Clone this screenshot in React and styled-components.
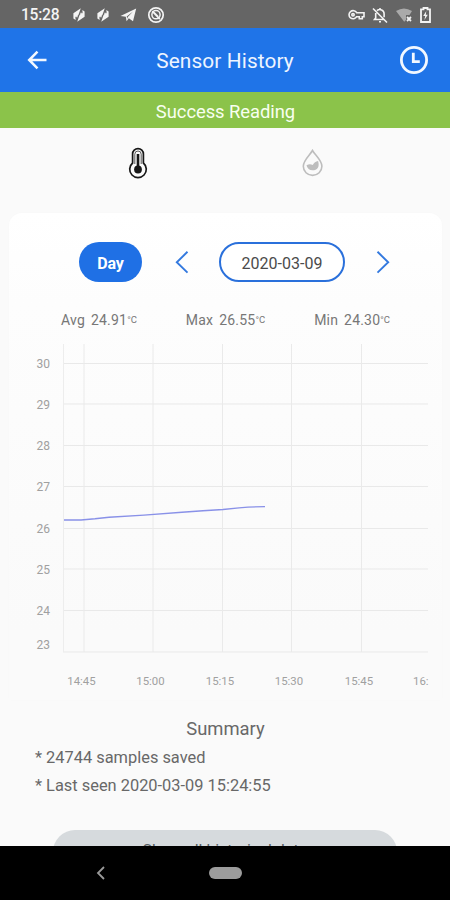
import React, { useState } from "react";
import styled, { createGlobalStyle } from "styled-components";

const GlobalStyle = createGlobalStyle`
* { box-sizing: border-box; }
body {
margin: 0;
background: #fafafa;
font-family: Roboto, "Liberation Sans", sans-serif;
}
button {
font-family: inherit;
padding: 0;
border: none;
background: transparent;
cursor: pointer;
}
`;

const Screen = styled.div`
display: flex;
flex-direction: column;
width: 450px;
height: 900px;
overflow: hidden;
background: #fafafa;
`;

const StatusBar = styled.div`
display: flex;
flex: 0 0 28px;
justify-content: space-between;
padding: 0 19px 0 21px;
background: #656565;
color: #f4f4f4;
`;

const StatusGroup = styled.div`
display: flex;
align-items: center;
gap: ${props => props.$gap}px;
padding-top: 1px;
`;

const Clock = styled.span`
width: 38px;
margin-right: 3px;
font-size: 15.6px;
font-weight: 500;
letter-spacing: -0.25px;
white-space: nowrap;
`;

const Header = styled.header`
display: grid;
grid-template-columns: 74px 1fr 74px;
flex: 0 0 64px;
align-items: center;
background: #1f74e8;
color: #eef5ff;
`;

const HeaderButton = styled.button`
display: flex;
justify-content: center;
padding-left: ${props => props.$shift || 0}px;
color: #f2f8ff;
`;

const HeaderTitle = styled.h1`
margin: 0;
padding-top: 2px;
text-align: center;
font-size: 20.8px;
font-weight: 400;
letter-spacing: 0.13px;
`;

const Banner = styled.div`
display: flex;
flex: 0 0 36px;
align-items: center;
justify-content: center;
padding: 2px 0 0 1px;
background: #8bc34a;
color: #f8fff0;
font-size: 18.4px;
letter-spacing: -0.05px;
`;

const Content = styled.main`
display: flex;
flex: 1;
flex-direction: column;
min-height: 0;
overflow: hidden;
`;

const TypeTabs = styled.div`
display: grid;
grid-template-columns: 1fr 1fr;
flex: 0 0 85px;
padding: 0 50px;
`;

const TypeTab = styled.button`
display: flex;
justify-content: center;
align-items: flex-start;
padding-top: ${props => props.$top}px;
color: ${props => props.$active ? "#171717" : "#bdbdbd"};
`;

const Card = styled.section`
display: flex;
flex: 0 0 487px;
flex-direction: column;
margin: 0 8px 0 9px;
border-radius: 13px 13px 0 0;
background: linear-gradient(#ffffff 0, #fdfdfd 90px, #fafafa 420px);
box-shadow: 0 0 5px rgba(0, 0, 0, 0.012);
`;

const Controls = styled.div`
display: flex;
align-items: center;
height: 40px;
margin: 29px 0 0 70px;
`;

const DayButton = styled.button`
width: 63px;
height: 40px;
border-radius: 20px;
background: #1f70e5;
color: #ffffff;
font-size: 16px;
font-weight: 700;
padding-top: 2px;
letter-spacing: -0.2px;
`;

const ArrowButton = styled.button`
display: flex;
width: 14px;
margin: 0 ${props => props.$right}px 0 ${props => props.$left}px;
color: #3379df;
`;

const DateButton = styled.button`
width: 126px;
height: 40px;
padding-top: 2px;
border: 2px solid #2a70db;
border-radius: 20px;
background: #ffffff;
color: #4b4b4b;
font-size: 16px;
`;

const Stats = styled.div`
display: flex;
justify-content: space-between;
width: 329px;
height: 20px;
margin: 28px 0 0 52px;
color: #777777;
font-size: 14px;
`;

const Stat = styled.div`
display: flex;
align-items: center;
gap: 6px;
white-space: nowrap;
letter-spacing: 0.2px;
`;

const Unit = styled.sup`
display: inline-block;
font-size: 9.5px;
line-height: 9px;
letter-spacing: 0;
vertical-align: 2px;
`;

const ChartSvg = styled.svg`
display: block;
flex: none;
margin-top: 12px;
font-family: Roboto, sans-serif;
font-size: 12px;
`;

const Summary = styled.section`
display: flex;
flex: none;
flex-direction: column;
padding: 16px 35px 0;
color: #686868;
`;

const SummaryTitle = styled.h2`
margin: 0 0 5px;
padding-left: 1px;
height: 24px;
text-align: center;
line-height: 25px;
font-size: 18.4px;
font-weight: 400;
letter-spacing: 0;
`;

const SummaryLine = styled.p`
margin: 0;
height: 28px;
line-height: 26px;
font-size: 16.4px;
`;

const HistoryButton = styled.button`
flex: 0 0 44px;
margin: 29px 53px 0;
padding-bottom: 4px;
border-radius: 22px;
background: #d6dadd;
color: #555b5f;
font-size: 16px;
`;

const NavigationBar = styled.nav`
display: grid;
grid-template-columns: 1fr 34px 1fr;
flex: 0 0 54px;
align-items: center;
padding: 0 0 0 1px;
background: #000000;
`;

const NavBack = styled.button`
display: flex;
justify-content: center;
padding-right: 9px;
color: #9a9a9a;
`;

const HomePill = styled.button`
width: 33px;
height: 12px;
border-radius: 6px;
background: #9c9c9c;
`;

const BoltIcon = () => (
    <svg width="14" height="16" viewBox="0 0 14 16">
        <path d="M8.8 1.2 1.4 6.2v5.2L3.6 13l-.2-3 3-2.1z" fill="currentColor" />
        <path d="M5.2 14.8l7.4-5V4.6L10.4 3l.2 3-3 2.1z" fill="currentColor" />
        <path d="M4.9 6.2v4.1M9.1 5.7v4.1" stroke="currentColor" strokeWidth="1.4" />
    </svg>
);

const PlaneIcon = () => (
    <svg width="17" height="16" viewBox="0 0 17 16">
        <path d="M.5 9 16.2 1.5l-3.2 12.8-4.2-3-2.2 2.9-.8-4.5zM6.7 9.4l.5 2.3.6-1.7L13 4.6z" fill="currentColor" fillRule="evenodd" />
    </svg>
);

const BlockedIcon = () => (
    <svg width="18" height="18" viewBox="0 0 18 18" fill="none" stroke="currentColor">
        <circle cx="9" cy="9" r="7.2" strokeWidth="1.7" />
        <circle cx="9" cy="8.7" r="4.1" strokeWidth="1.5" />
        <path d="m5.3 5.2 7.5 8M7 6.7l4 4" strokeWidth="1.7" />
    </svg>
);

const KeyIcon = () => (
    <svg width="17" height="12" viewBox="0 0 17 12" fill="none" stroke="currentColor" strokeWidth="1.6">
        <path d="M8.7 3.7H16v4h-1.7v2h-3v-2H8.7A4.1 4.1 0 1 1 8.7 3.7Z" />
        <circle cx="5" cy="5.8" r="1.2" />
    </svg>
);

const BellOffIcon = () => (
    <svg width="16" height="18" viewBox="0 0 16 18" fill="none" stroke="currentColor" strokeWidth="1.6">
        <path d="M5 4.7a4.2 4.2 0 0 1 7.1 3.2v3.4M3.7 6.9v5L2.5 13.5h9.7M7 15.7h2M8 2v2M1 2.5l14 14" />
    </svg>
);

const WifiIcon = () => (
    <svg width="18" height="16" viewBox="0 0 18 16">
        <path d="M1 4Q9-1 17 4l-2.5 4H11v5l-1.8 1.8z" fill="#aaa" />
        <path d="m12 10 4 4m0-4-4 4" stroke="#f2f2f2" strokeWidth="1.8" />
    </svg>
);

const BatteryIcon = () => (
    <svg width="11" height="16" viewBox="0 0 11 16">
        <path d="M3.5 1h4v1.4H10V15H1V2.4h2.5z" fill="none" stroke="currentColor" strokeWidth="1.8" />
        <path d="M6.3 4 3.2 9h2l-.8 4 3.4-5.2h-2z" fill="currentColor" />
    </svg>
);

const BackIcon = () => (
    <svg width="20" height="20" viewBox="0 0 20 20" fill="none" stroke="currentColor" strokeWidth="2.5">
        <path d="M19.5 10H2.5M10.5 1.7 2.2 10l8.3 8.3" />
    </svg>
);

const HistoryIcon = () => (
    <svg width="30" height="30" viewBox="0 0 30 30" fill="none" stroke="currentColor" strokeWidth="2.8">
        <circle cx="15" cy="15" r="12.6" />
        <path d="M14.3 7.7v9h6.5" />
    </svg>
);

const ThermometerIcon = () => (
    <svg width="20" height="34" viewBox="0 0 20 34" fill="none" stroke="currentColor">
        <path d="M4.6 16V7a5.4 5.4 0 0 1 10.8 0v9a8.3 8.3 0 1 1-10.8 0Z" strokeWidth="1.7" />
        <path d="M10 7v16" strokeWidth="2.6" />
        <circle cx="10" cy="22.5" r="3.9" fill="currentColor" stroke="none" />
        <path d="M6.8 17V7.2a3.2 3.2 0 0 1 6.4 0V17" strokeWidth=".7" />
    </svg>
);

const DropIcon = () => (
    <svg width="22" height="28" viewBox="0 0 22 28">
        <path d="M10.5 1.5C8 6 1.3 11.2 1.3 17.2a9.3 9.2 0 0 0 18.6 0C19.9 11.2 13 6 10.5 1.5Z" fill="none" stroke="currentColor" strokeWidth="1.6" />
        <path d="M4.5 16.2q3.5-1.9 6.2-.1 1.9-3.8 5.4-4.2c1.8 6.2-.8 9.4-5.6 9.4q-4.8 0-6-5.1Z" fill="currentColor" />
    </svg>
);

const Chevron = ({ next }) => (
    <svg width="14" height="24" viewBox="0 0 14 24" fill="none" stroke="currentColor" strokeWidth="1.9">
        <path d={next ? "m1.5 1.8 10.7 10.4L1.5 22.6" : "M12.5 1.8 1.8 12.2l10.7 10.4"} />
    </svg>
);

const yTicks = [
    { label: "30", y: 21.5 },
    { label: "29", y: 62 },
    { label: "28", y: 103.5 },
    { label: "27", y: 144.5 },
    { label: "26", y: 186.5 },
    { label: "25", y: 227 },
    { label: "24", y: 268.5 },
    { label: "23", y: 310 },
];

const xTicks = [
    { label: "14:45", x: 75 },
    { label: "15:00", x: 144 },
    { label: "15:15", x: 213.5 },
    { label: "15:30", x: 282.5 },
    { label: "15:45", x: 352.5 },
];

const stats = [
    { label: "Avg", value: "24.91" },
    { label: "Max", value: "26.55" },
    { label: "Min", value: "24.30" },
];

const TemperatureChart = () => (
    <ChartSvg width="433" height="357" viewBox="0 0 433 357">
        {yTicks.map((tick) => (
            <g key={tick.label}>
                <path d={`M54 ${tick.y}H419`} stroke="#e9e9e9" />
                <text x="41" y={tick.label === "23" ? 307 : tick.y + 4.5} textAnchor="end" fill="#a0a0a0">{tick.label}</text>
            </g>
        ))}
        {xTicks.map((tick) => (
            <g key={tick.label}>
                <path d={`M${tick.x} 2V310`} stroke="#eaeaea" />
                <text x={tick.x - 2.5} y="343" textAnchor="middle" fill="#a0a0a0" fontSize="11.4">{tick.label}</text>
            </g>
        ))}
        <text x="404" y="343" fill="#a0a0a0" fontSize="11.4">16:</text>
        <path d="M54.5 2V310" stroke="#ededed" />
        <path d="M55 178h17l14-1.2 14-1.6 35-2.1 38-2.8 21-1.6 20-1.2 16-1.6 9-.8 17-.5" fill="none" stroke="#8991e8" strokeWidth="1.4" />
    </ChartSvg>
);

const App = () => {

    const [sensorType, setSensorType] = useState("temperature");

    return (
        <Screen>
            <GlobalStyle />
            <StatusBar>
                <StatusGroup $gap={10}>
                    <Clock>15:28</Clock>
                    <BoltIcon />
                    <BoltIcon />
                    <PlaneIcon />
                    <BlockedIcon />
                </StatusGroup>
                <StatusGroup $gap={7}>
                    <KeyIcon />
                    <BellOffIcon />
                    <WifiIcon />
                    <BatteryIcon />
                </StatusGroup>
            </StatusBar>
            <Header>
                <HeaderButton aria-label="Back"><BackIcon /></HeaderButton>
                <HeaderTitle>Sensor History</HeaderTitle>
                <HeaderButton $shift={2} aria-label="History"><HistoryIcon /></HeaderButton>
            </Header>
            <Banner>Success Reading</Banner>
            <Content>
                <TypeTabs>
                    <TypeTab
                        aria-label="Temperature"
                        $top={19}
                        $active={sensorType === "temperature"}
                        onClick={() => { setSensorType("temperature"); }}
                    >
                        <ThermometerIcon />
                    </TypeTab>
                    <TypeTab
                        aria-label="Humidity"
                        $top={21}
                        $active={sensorType === "humidity"}
                        onClick={() => { setSensorType("humidity"); }}
                    >
                        <DropIcon />
                    </TypeTab>
                </TypeTabs>
                <Card>
                    <Controls>
                        <DayButton>Day</DayButton>
                        <ArrowButton $left={33} $right={30} aria-label="Previous day"><Chevron /></ArrowButton>
                        <DateButton>2020-03-09</DateButton>
                        <ArrowButton $left={31} $right={0} aria-label="Next day"><Chevron next /></ArrowButton>
                    </Controls>
                    <Stats>
                        {stats.map((x) => (
                            <Stat key={x.label}>
                                <span>{x.label}</span>
                                <span>{x.value}<Unit>°C</Unit></span>
                            </Stat>
                        ))}
                    </Stats>
                    <TemperatureChart />
                </Card>
                <Summary>
                    <SummaryTitle>Summary</SummaryTitle>
                    <SummaryLine>* 24744 samples saved</SummaryLine>
                    <SummaryLine>* Last seen 2020-03-09 15:24:55</SummaryLine>
                </Summary>
                <HistoryButton>Show all historical data</HistoryButton>
            </Content>
            <NavigationBar>
                <NavBack aria-label="Back">
                    <svg width="9" height="14" viewBox="0 0 9 14" fill="none" stroke="currentColor" strokeWidth="1.8">
                        <path d="M8 1 2 7l6 6" />
                    </svg>
                </NavBack>
                <HomePill aria-label="Home" />
            </NavigationBar>
        </Screen>
    )
}

export default App
